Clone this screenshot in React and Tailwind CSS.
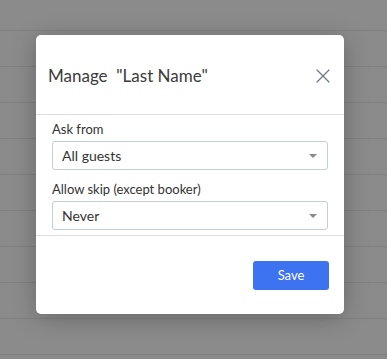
import { X } from 'lucide-react'

function SelectBox({ value }) {
  return (
    <div className="flex h-[29px] items-center justify-between rounded-[3px] border border-[#c3cedb] bg-white pl-[9px] pr-[10px]">
      <span className="text-[14px] text-[#333]">{value}</span>
      <span className="h-0 w-0 border-x-[4px] border-t-[4px] border-x-transparent border-t-[#8a8a8a]" />
    </div>
  )
}

export default function App() {
  const stripes = Array.from({ length: 10 })

  return (
    <div className="relative h-[359px] w-[387px] overflow-hidden bg-[#8b8b8b] font-['Lato',sans-serif]">
      {/* list behind the overlay */}
      <div className="flex flex-col pt-[30px]">
        {stripes.map((_, i) => (
          <div key={i} className="h-[36px] border-t border-[#808080]" />
        ))}
      </div>

      <div className="absolute left-[36px] top-[35px] flex h-[279px] w-[308px] flex-col rounded-[5px] bg-white shadow-[0_4px_24px_rgba(0,0,0,0.25)]">
        <div className="flex h-[80px] items-center justify-between border-b border-[#dedede] pl-[12px] pr-[9px] pt-[2px]">
          <h2 className="text-[17px] text-[#3b3b3b]">Manage&nbsp; "Last Name"</h2>
          <X size={24} strokeWidth={1.3} className="text-[#6c7a8c]" />
        </div>

        <div className="flex flex-col border-b border-[#dedede] px-[16px] pb-[5px] pt-[4px]">
          <label className="text-[13px] leading-[20px] text-[#333]">Ask from</label>
          <div className="mt-[2px]">
            <SelectBox value="All guests" />
          </div>
          <label className="mt-[9px] text-[13px] leading-[20px] text-[#333]">Allow skip (except booker)</label>
          <div className="mt-[2px]">
            <SelectBox value="Never" />
          </div>
        </div>

        <div className="flex justify-end px-[15px] pt-[25px]">
          <button className="h-[29px] w-[76px] rounded-[3px] bg-[#3d72f0] text-[13px] text-white">Save</button>
        </div>
      </div>
    </div>
  )
}
